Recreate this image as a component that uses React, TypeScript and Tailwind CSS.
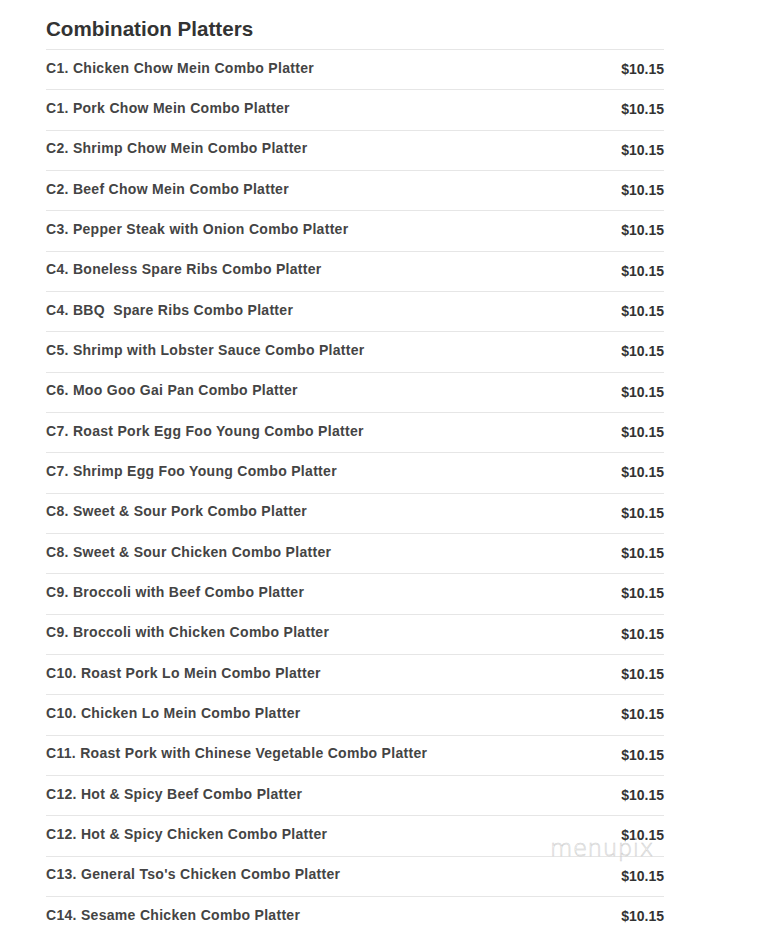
const items = [
  'C1. Chicken Chow Mein Combo Platter',
  'C1. Pork Chow Mein Combo Platter',
  'C2. Shrimp Chow Mein Combo Platter',
  'C2. Beef Chow Mein Combo Platter',
  'C3. Pepper Steak with Onion Combo Platter',
  'C4. Boneless Spare Ribs Combo Platter',
  'C4. BBQ  Spare Ribs Combo Platter',
  'C5. Shrimp with Lobster Sauce Combo Platter',
  'C6. Moo Goo Gai Pan Combo Platter',
  'C7. Roast Pork Egg Foo Young Combo Platter',
  'C7. Shrimp Egg Foo Young Combo Platter',
  'C8. Sweet & Sour Pork Combo Platter',
  'C8. Sweet & Sour Chicken Combo Platter',
  'C9. Broccoli with Beef Combo Platter',
  'C9. Broccoli with Chicken Combo Platter',
  'C10. Roast Pork Lo Mein Combo Platter',
  'C10. Chicken Lo Mein Combo Platter',
  "C11. Roast Pork with Chinese Vegetable Combo Platter",
  'C12. Hot & Spicy Beef Combo Platter',
  'C12. Hot & Spicy Chicken Combo Platter',
  "C13. General Tso's Chicken Combo Platter",
  'C14. Sesame Chicken Combo Platter',
];

export default function App() {
  return (
    <div className="relative h-[932px] w-[782px] overflow-hidden bg-white font-['Liberation_Sans',Arial,sans-serif] text-[#333]">
      <div className="ml-[46px] w-[618px]">
        <h2 className="flex h-[49px] items-center pt-[10px] text-[20.6px] font-bold text-[#333]">
          Combination Platters
        </h2>
        {items.map((name, i) => (
          <div
            key={i}
            className="flex h-[40.33px] items-center justify-between border-t border-[#e6e6e6] pb-[3px] text-[14px]"
          >
            <span className="whitespace-pre font-bold tracking-[0.3px] text-[#444]">{name}</span>
            <span className="mt-[3px] font-bold text-[#333]">$10.15</span>
          </div>
        ))}
      </div>

      {/* watermark */}
      <div className="pointer-events-none absolute left-[550px] top-[837px] font-['DejaVu_Sans',sans-serif] text-[23px] font-extralight leading-none tracking-[0.5px] text-transparent [-webkit-text-stroke:0.5px_#cdcdcd]">
        menupix
      </div>
    </div>
  );
}
